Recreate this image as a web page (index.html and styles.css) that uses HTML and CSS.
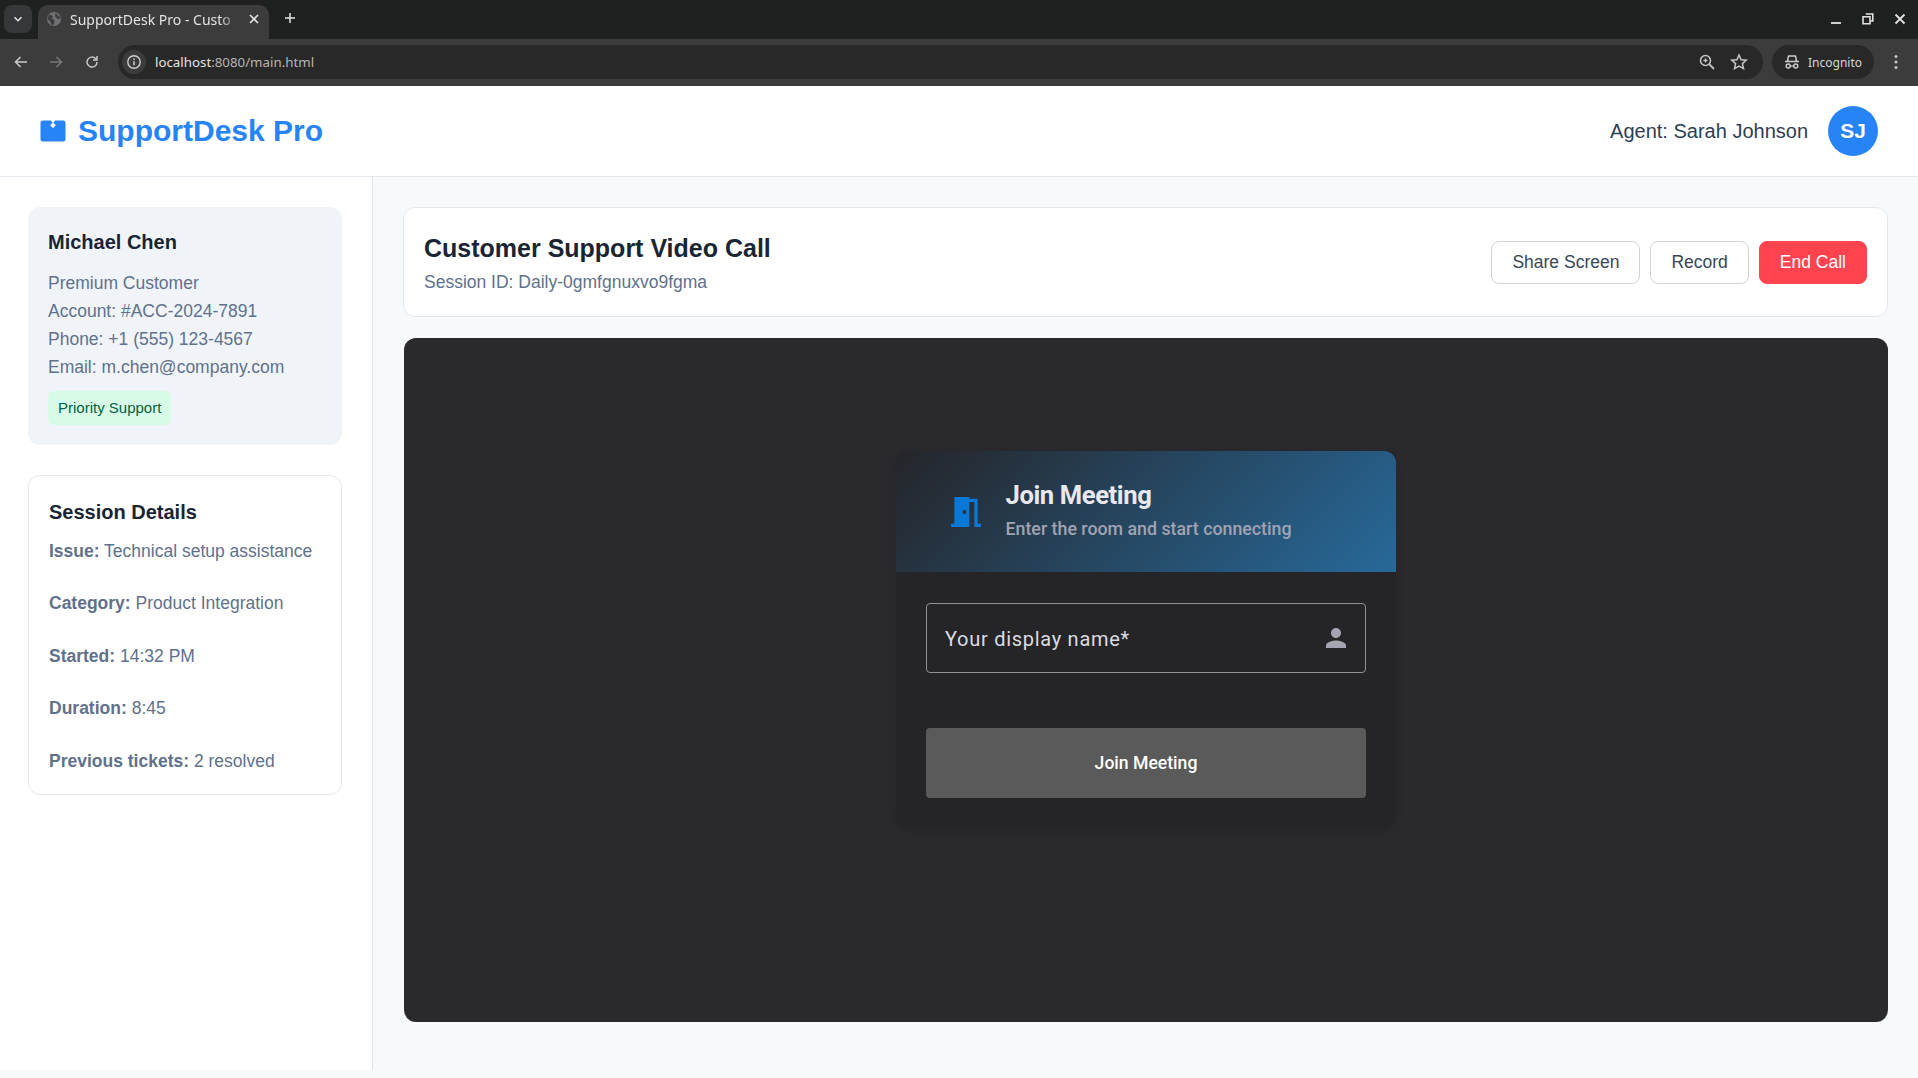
FILE: index.html
```html
<!DOCTYPE html>
<html lang="en">
<head>
  <meta charset="UTF-8">
  <meta name="viewport" content="width=device-width, initial-scale=1.0">
  <title>SupportDesk Pro - Customer Support</title>
  <link rel="stylesheet" href="styles.css">
</head>
<body>
  <!-- browser frame -->
  <div class="tabstrip">
    <div class="tab-search">
      <svg width="12" height="12" viewBox="0 0 12 12"><path d="M2.5 4.2 6 7.7l3.5-3.5" fill="none" stroke="#e3e3e3" stroke-width="1.6"/></svg>
    </div>
    <div class="tab">
      <svg class="tab-globe" width="16" height="16" viewBox="0 0 16 16"><circle cx="8" cy="8" r="7" fill="#6f7073"/><path d="M3 3.5 7 5 6 7.5 8.5 9 8 13l-2 1.5L4 10 1.5 8zM10 1.5l1 2.5 2.500 1 1 2.500-3 .5L9 5z" fill="#3c3c3c"/></svg>
      <span class="tab-title">SupportDesk Pro - Custo</span>
      <svg width="12" height="12" viewBox="0 0 12 12"><path d="M2 2l8 8M10 2l-8 8" stroke="#e3e3e3" stroke-width="1.6"/></svg>
    </div>
    <svg class="new-tab" width="12" height="12" viewBox="0 0 12 12"><path d="M6 1v10M1 6h10" stroke="#e3e3e3" stroke-width="1.5"/></svg>
    <div class="win-controls">
      <svg width="12" height="12" viewBox="0 0 12 12"><path d="M1 10h10" stroke="#e3e3e3" stroke-width="1.8"/></svg>
      <svg width="12" height="12" viewBox="0 0 12 12"><path d="M3.800 1h7v7H8.500M1 3.800h7v7H1z" fill="none" stroke="#e3e3e3" stroke-width="1.600"/></svg>
      <svg width="12" height="12" viewBox="0 0 12 12"><path d="M1.500 1.500l9 9M10.500 1.500l-9 9" stroke="#e3e3e3" stroke-width="1.800"/></svg>
    </div>
  </div>
  <div class="toolbar">
    <svg width="16" height="16" viewBox="0 0 16 16"><path d="M14 8H3M7.500 3 2.500 8l5 5" fill="none" stroke="#c7c7c7" stroke-width="1.600"/></svg>
    <svg width="16" height="16" viewBox="0 0 16 16"><path d="M2 8h11M8.500 3l5 5-5 5" fill="none" stroke="#77797a" stroke-width="1.600"/></svg>
    <svg class="reload" width="16" height="16" viewBox="0 0 16 16"><path d="M13 8a5 5 0 1 1-1.500-3.500L13 6M13 2v4H9" fill="none" stroke="#c7c7c7" stroke-width="1.500"/></svg>
    <div class="omnibox">
      <span class="site-info">
        <svg width="16" height="16" viewBox="0 0 16 16"><circle cx="8" cy="8" r="6.200" fill="none" stroke="#d0d0d0" stroke-width="1.400"/><path d="M8 7.200v4M8 4.600v1.400" stroke="#d0d0d0" stroke-width="1.500"/></svg>
      </span>
      <span class="url"><span class="url-host">localhost</span>:8080/main.html</span>
      <svg class="omni-zoom" width="18" height="18" viewBox="0 0 18 18"><circle cx="7.500" cy="7.500" r="5" fill="none" stroke="#c7c7c7" stroke-width="1.500"/><path d="M11.200 11.200 16 16" stroke="#c7c7c7" stroke-width="1.800"/><path d="M7.500 5.500v4M5.500 7.500h4" stroke="#c7c7c7" stroke-width="1.300"/></svg>
      <svg class="omni-star" width="18" height="18" viewBox="0 0 18 18"><path d="M9 2l2.100 4.700 5.100.5-3.800 3.400 1.100 5L9 13l-4.500 2.600 1.100-5-3.800-3.400 5.100-.5z" fill="none" stroke="#c7c7c7" stroke-width="1.500"/></svg>
    </div>
    <div class="incognito">
      <svg width="16" height="16" viewBox="0 0 16 16"><path d="M1 7.500h14M3.500 7l1-5h7l1 5" fill="none" stroke="#d0d0d0" stroke-width="1.400"/><circle cx="4.200" cy="12" r="2" fill="none" stroke="#d0d0d0" stroke-width="1.400"/><circle cx="11.800" cy="12" r="2" fill="none" stroke="#d0d0d0" stroke-width="1.400"/><path d="M6.200 12h3.600" stroke="#d0d0d0" stroke-width="1.200"/></svg>
      <span>Incognito</span>
    </div>
    <svg class="kebab" width="4" height="16" viewBox="0 0 4 16"><circle cx="2" cy="2.500" r="1.500" fill="#c7c7c7"/><circle cx="2" cy="8" r="1.500" fill="#c7c7c7"/><circle cx="2" cy="13.500" r="1.500" fill="#c7c7c7"/></svg>
  </div>

  <!-- app -->
  <header class="app-header">
    <div class="logo">
      <svg width="26" height="22" viewBox="0 0 26 22"><path d="M3 .5h7.800L13 3l2.200-2.500H23A2.500 2.500 0 0 1 25.500 3v16a2.500 2.500 0 0 1-2.500 2.500H3A2.500 2.500 0 0 1 .5 19V3A2.500 2.500 0 0 1 3 .5z" fill="#2684f6"/><path d="M13 2.200l2.800 3L13 8.200l-2.800-3z" fill="#fff"/></svg>
      <span>SupportDesk Pro</span>
    </div>
    <div class="agent">
      <span class="agent-name">Agent: Sarah Johnson</span>
      <div class="avatar">SJ</div>
    </div>
  </header>

  <div class="workspace">
    <aside class="sidebar">
      <div class="customer-card">
        <h3>Michael Chen</h3>
        <p>Premium Customer</p>
        <p>Account: #ACC-2024-7891</p>
        <p>Phone: +1 (555) 123-4567</p>
        <p>Email: m.chen@company.com</p>
        <span class="badge">Priority Support</span>
      </div>
      <div class="session-card">
        <h3>Session Details</h3>
        <p><strong>Issue:</strong> Technical setup assistance</p>
        <p><strong>Category:</strong> Product Integration</p>
        <p><strong>Started:</strong> 14:32 PM</p>
        <p><strong>Duration:</strong> 8:45</p>
        <p><strong>Previous tickets:</strong> 2 resolved</p>
      </div>
    </aside>

    <main class="main">
      <div class="call-bar">
        <div class="call-info">
          <h2>Customer Support Video Call</h2>
          <p>Session ID: Daily-0gmfgnuxvo9fgma</p>
        </div>
        <div class="call-actions">
          <button class="btn">Share Screen</button>
          <button class="btn">Record</button>
          <button class="btn btn-danger">End Call</button>
        </div>
      </div>

      <div class="stage">
        <div class="prejoin">
          <div class="prejoin-head">
            <svg width="40" height="40" viewBox="0 0 24 24"><path d="M14 6v15H3v-2h2V3h9v1h5v15h2v2h-4V6h-3zm-4 5v2h2v-2h-2z" fill="#0a78d6"/></svg>
            <div>
              <h2>Join Meeting</h2>
              <p>Enter the room and start connecting</p>
            </div>
          </div>
          <form class="prejoin-form">
            <div class="name-field">
              <input type="text" placeholder="Your display name*">
              <svg width="30" height="30" viewBox="0 0 24 24"><path d="M12 12c2.210 0 4-1.790 4-4s-1.790-4-4-4-4 1.790-4 4 1.790 4 4 4zm0 2c-2.670 0-8 1.340-8 4v2h16v-2c0-2.670-5.330-4-8-4z" fill="#a4a4b2"/></svg>
            </div>
            <button type="button" class="join-btn">Join Meeting</button>
          </form>
        </div>
      </div>
    </main>
  </div>
</body>
</html>
```

FILE: styles.css
```css
* {
  box-sizing: border-box;
}
body {
  margin: 0;
  height: 1078px;
  overflow: hidden;
  background: #f8f9fb;
  font-family: "Liberation Sans", Arial, sans-serif;
  color: #1a2533;
}
h2, h3, p {
  margin: 0;
}

/* browser frame */
.tabstrip {
  height: 39px;
  background: #1f2120;
  display: flex;
  align-items: flex-end;
  position: relative;
  padding-left: 4px;
}
.tab-search {
  width: 28px;
  height: 28px;
  margin: 0 6px 6px 0;
  border-radius: 8px;
  background: #363738;
  display: flex;
  align-items: center;
  justify-content: center;
}
.tab {
  width: 231px;
  height: 34px;
  background: #3c3c3c;
  border-radius: 10px 10px 0 0;
  display: flex;
  align-items: center;
  padding: 0 9px 6px 8px;
  gap: 8px;
  color: #e3e3e3;
  font-family: "Noto Sans", sans-serif;
  font-size: 14px;
}
.tab-globe {
  flex: none;
}
.tab-title {
  flex: 1;
  white-space: nowrap;
  -webkit-mask-image: linear-gradient(90deg, #000 88%, transparent 100%);
  mask-image: linear-gradient(90deg, #000 88%, transparent 100%);
}
.new-tab {
  margin: 0 0 15px 15px;
}
.win-controls {
  margin: 0 12px 14px auto;
  display: flex;
  gap: 20px;
}
.toolbar {
  height: 47px;
  background: #3c3c3c;
  display: flex;
  align-items: center;
  padding: 0 14px 1px 13px;
  color: #e3e3e3;
  font-family: "Noto Sans", sans-serif;
  font-size: 13.300px;
}
.toolbar > svg + svg {
  margin-left: 19px;
}
.toolbar > .reload {
  margin-left: 20px;
}
.omnibox {
  width: 1645px;
  height: 34px;
  margin-left: 18px;
  background: #282828;
  border-radius: 17px;
  display: flex;
  align-items: center;
  padding: 0 11px 0 4px;
}
.site-info {
  width: 24px;
  height: 24px;
  border-radius: 50%;
  background: #3c3c3c;
  display: flex;
  align-items: center;
  justify-content: center;
  margin-right: 9px;
}
.url {
  flex: 1;
  color: #b5b5b5;
}
.url-host {
  color: #e3e3e3;
}
.omni-star {
  margin-left: 14px;
  margin-right: 4px;
}
.incognito {
  width: 102px;
  height: 34px;
  margin-left: 9px;
  background: #282828;
  border-radius: 17px;
  display: flex;
  align-items: center;
  gap: 8px;
  padding-left: 12px;
  font-size: 12px;
  color: #d6d6d6;
}
.kebab {
  margin-left: 20px;
}

/* app header */
.app-header {
  height: 91px;
  background: #fff;
  border-bottom: 1px solid #e2e8f0;
  display: flex;
  align-items: center;
  justify-content: space-between;
  padding: 0 40px;
}
.logo {
  display: flex;
  align-items: center;
  gap: 12px;
  color: #2684f6;
  font-size: 30px;
  font-weight: 700;
}
.agent {
  display: flex;
  align-items: center;
  gap: 20px;
}
.agent-name {
  font-size: 20px;
  color: #2d3e55;
}
.avatar {
  width: 50px;
  height: 50px;
  border-radius: 50%;
  background: #2684f6;
  color: #fff;
  font-size: 20.800px;
  font-weight: 700;
  display: flex;
  align-items: center;
  justify-content: center;
}

/* layout */
.workspace {
  height: 893px;
  display: flex;
}
.sidebar {
  width: 373px;
  flex: none;
  background: #fff;
  border-right: 1px solid #e2e8f0;
  padding: 30px 30px 0 28px;
}
.main {
  flex: 1;
  padding: 30px 30px 48px 31px;
  display: flex;
  flex-direction: column;
  gap: 21px;
}

/* sidebar cards */
.customer-card {
  height: 238px;
  background: #f0f4f9;
  border-radius: 12px;
  padding: 20px;
  margin-bottom: 30px;
  font-size: 17.500px;
  line-height: 28.160px;
  color: #5f718c;
}
.customer-card h3 {
  font-size: 20px;
  line-height: 30px;
  color: #1a2533;
  margin-bottom: 11.500px;
}
.badge {
  display: inline-block;
  margin-top: 10px;
  padding: 3px 10px;
  background: #d8fbe8;
  color: #036141;
  border-radius: 6px;
  font-size: 15px;
  line-height: 28px;
}
.session-card {
  background: #fff;
  border: 1px solid #e2e8f0;
  border-radius: 12px;
  padding: 21px 20px 20px;
  height: 320px;
  font-size: 17.500px;
  line-height: 28.160px;
  color: #5f718c;
}
.session-card h3 {
  font-size: 20px;
  line-height: 30px;
  color: #1a2533;
  margin-bottom: 9.500px;
}
.session-card p {
  margin-bottom: 24.400px;
}

/* call bar */
.call-bar {
  height: 110px;
  flex: none;
  background: #fff;
  border: 1px solid #e2e8f0;
  border-radius: 12px;
  display: flex;
  align-items: center;
  justify-content: space-between;
  padding: 0 20px;
  margin-left: -1px;
}
.call-info {
  padding-top: 2px;
}
.call-bar h2 {
  font-size: 25px;
  line-height: 35px;
  color: #1a2533;
}
.call-bar p {
  margin-top: 2px;
  font-size: 17.500px;
  line-height: 28px;
  color: #5f718c;
}
.call-actions {
  display: flex;
  gap: 10px;
}
.btn {
  height: 43px;
  padding: 0 20px;
  background: #fff;
  border: 1px solid #d1d5db;
  border-radius: 8px;
  font-family: inherit;
  font-size: 17.500px;
  color: #374658;
}
.btn-danger {
  background: #ff444f;
  border-color: #ff444f;
  color: #fff;
}

/* video stage */
.stage {
  flex: 1;
  background: #2a2a2e;
  border-radius: 12px;
  display: flex;
  justify-content: center;
  align-items: flex-start;
  padding-top: 113px;
}
.prejoin {
  width: 500px;
  background: #252528;
  border-radius: 12px;
  box-shadow: 0 2px 8px rgba(0, 0, 0, 0.1);
  overflow: hidden;
  font-family: Roboto, sans-serif;
}
.prejoin-head {
  height: 121px;
  background: linear-gradient(135deg, #252529 0%, #27699a 100%);
  display: flex;
  align-items: center;
  gap: 19.500px;
  padding: 0 0 3px 50px;
}
.prejoin-head svg {
  margin-top: 3px;
}
.prejoin-head h2 {
  font-size: 25.600px;
  line-height: 32px;
  letter-spacing: -0.4px;
  color: #e8e8ee;
  margin-top: -1px;
}
.prejoin-head p {
  margin-top: 6px;
  font-size: 17.800px;
  font-weight: 500;
  line-height: 24px;
  color: #a1a3b3;
}
.prejoin-form {
  padding: 31px 30px 30px;
}
.name-field {
  position: relative;
  margin-bottom: 55px;
}
.name-field input {
  width: 100%;
  height: 70px;
  background: transparent;
  border: 1px solid #8d9194;
  border-radius: 4px;
  padding: 2px 60px 0 18px;
  font-family: inherit;
  font-size: 20px;
  letter-spacing: 0.720px;
  color: #e8e8ee;
}
.name-field input::placeholder {
  color: #dcdce2;
  opacity: 1;
}
.name-field svg {
  position: absolute;
  right: 15px;
  top: 20px;
}
.join-btn {
  display: block;
  width: 100%;
  height: 70px;
  background: #5a5a5a;
  border: none;
  border-radius: 4px;
  color: #fff;
  font-family: inherit;
  font-size: 17.600px;
  font-weight: 500;
}
```
